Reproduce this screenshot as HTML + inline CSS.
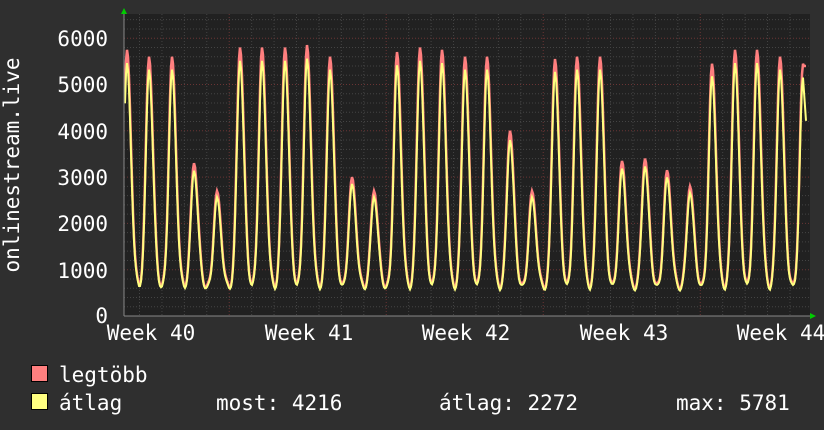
<!DOCTYPE html>
<html><head><meta charset="utf-8"><style>
body{margin:0;background:#2f2f2f;width:824px;height:430px;overflow:hidden;font-family:"DejaVu Sans Mono","Liberation Mono",monospace;color:#fff}
svg{position:absolute;left:0;top:0}
</style></head><body>
<svg id="s" width="824" height="430" xmlns="http://www.w3.org/2000/svg" font-family="DejaVu Sans Mono, Liberation Mono, monospace" font-size="21" fill="#fff">
<rect x="124" y="14" width="686" height="302" fill="#212121"/>
<g id="grid"></g>
<path id="mx" fill="none" stroke="#ff7f7f" stroke-width="2.5"/>
<path id="av" fill="none" stroke="#ffff80" stroke-width="2"/>
<line x1="124" y1="316" x2="815" y2="316" stroke="#888" stroke-width="1"/>
<line x1="124" y1="10" x2="124" y2="316" stroke="#888" stroke-width="1"/>
<polygon points="121,14 127,14 124,8" fill="#0c0"/>
<polygon points="810,313 810,319 816,316" fill="#0c0"/>
<g text-anchor="end">
<text x="108" y="46">6000</text><text x="108" y="92">5000</text><text x="108" y="139">4000</text>
<text x="108" y="185">3000</text><text x="108" y="231">2000</text><text x="108" y="278">1000</text>
<text x="108" y="323">0</text></g>
<g text-anchor="middle">
<text x="151" y="340">Week 40</text><text x="309" y="340">Week 41</text><text x="466" y="340">Week 42</text>
<text x="624" y="340">Week 43</text><text x="781" y="340">Week 44</text></g>
<text transform="translate(19,165) rotate(-90)" text-anchor="middle">onlinestream.live</text>
<rect x="31.5" y="365.5" width="16" height="16" fill="#ff7f7f" stroke="#000"/>
<rect x="31.5" y="393.5" width="16" height="16" fill="#ffff80" stroke="#000"/>
<text x="59" y="382">legtöbb</text>
<text x="59" y="410">átlag</text>
<text x="216" y="410">most: 4216</text>
<text x="439" y="410">átlag: 2272</text>
<text x="676" y="410">max: 5781</text>
</svg>
<script>
var g=document.getElementById('grid'),h='';
for(var v=200;v<=6400;v+=200){var y=316-v*0.0463;if(y<14)break;var maj=v%1000==0;
h+='<line x1="124" x2="810" y1="'+y+'" y2="'+y+'" stroke="'+(maj?'#6a3434':'#444')+'" stroke-dasharray="1,2"/>';}
for(var x=139.5;x<810;x+=22.43){var maj=Math.abs((x-229)%157)<3||Math.abs((x-229)%157-157)<3;
h+='<line y1="14" y2="316" x1="'+x+'" x2="'+x+'" stroke="'+(maj?'#6a3434':'#444')+'" stroke-dasharray="1,2"/>';}
g.innerHTML=h;
var pk=[[127,5750],[149,5600],[172,5600],[194,3300],[217,2700],[240,5800],[262,5800],[285,5800],[307,5850],[330,5600],[352,3000],[374,2700],[397,5700],[420,5800],[442,5750],[465,5600],[487,5600],[510,4000],[532,2700],[555,5550],[577,5600],[600,5600],[622,3350],[645,3400],[667,3150],[690,2800],[712,5450],[735,5750],[757,5750],[780,5600],[803,5450]];
function val(x){var b=620+60*Math.sin(x*0.7);var s=b;for(var i=0;i<pk.length;i++){var d=(x-pk[i][0]);var w=d>0?4.0:3.2;var u=d/w;var f=Math.exp(-u*u/2);var v=b+(pk[i][1]-b)*f;if(v>s)s=v;}return s;}
var m='',a='';
for(var x=125;x<=806;x+=1){var v=val(x);if(x>803)v=5400;var y1=316-v*0.0463,y2=316-(v*0.95)*0.0463;
if(x>=803){var t=(x-803)/3;y2=316-(5150*(1-t)+4216*t)*0.0463;}
m+=(x==125?'M':'L')+x+','+y1.toFixed(1);a+=(x==125?'M':'L')+x+','+y2.toFixed(1);}
document.getElementById('mx').setAttribute('d',m);document.getElementById('av').setAttribute('d',a);
</script>
</body></html>
